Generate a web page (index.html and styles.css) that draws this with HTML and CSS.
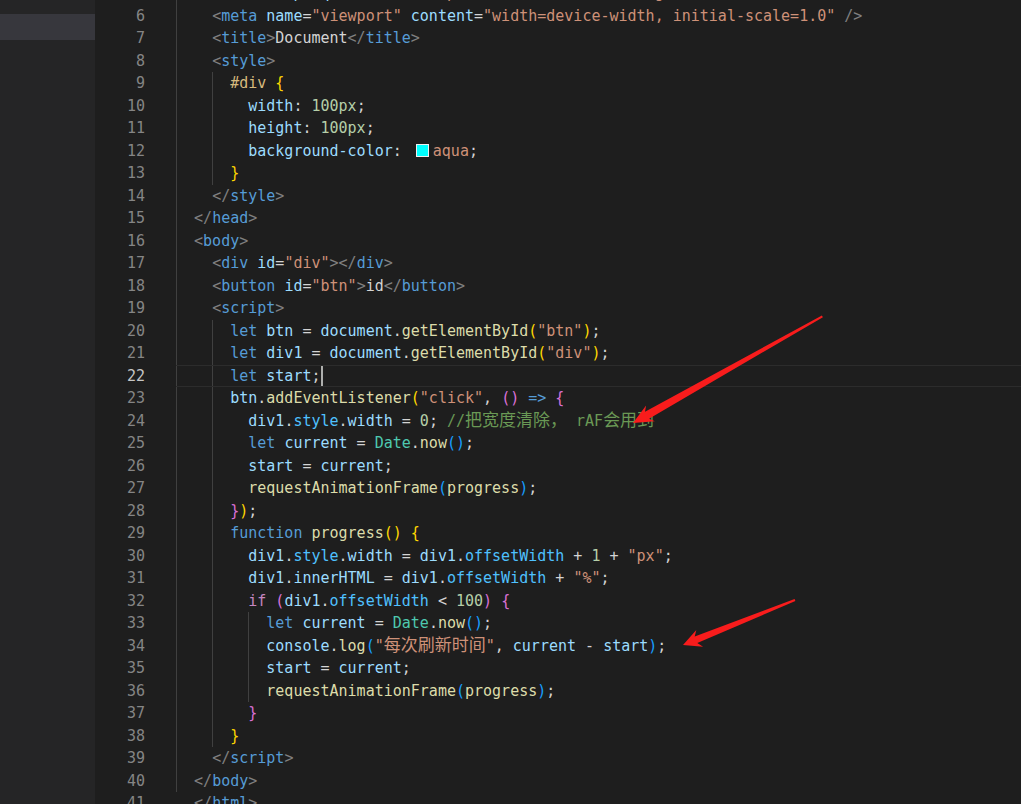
FILE: index.html
```html
<!DOCTYPE html>
<html lang="zh-CN">
<head>
  <meta charset="UTF-8">
  <title>index.html - Editor</title>
  <link rel="stylesheet" href="styles.css">
</head>
<body>

<div class="window">
  <!-- Explorer -->
  <aside class="sidebar">
    <div class="file active"></div>
  </aside>

  <!-- Editor -->
  <main class="editor">
    <div class="lines">
      <div class="row"><span class="num">5</span><code class="code g1">    <span class="p">&lt;</span><span class="t">meta</span> <span class="a">http-equiv</span>=<span class="s">"X-UA-Compatible"</span> <span class="a">content</span>=<span class="s">"IE=edge"</span> <span class="p">/&gt;</span></code></div>
      <div class="row"><span class="num">6</span><code class="code g1">    <span class="p">&lt;</span><span class="t">meta</span> <span class="a">name</span>=<span class="s">"viewport"</span> <span class="a">content</span>=<span class="s">"width=device-width, initial-scale=1.0"</span> <span class="p">/&gt;</span></code></div>
      <div class="row"><span class="num">7</span><code class="code g1">    <span class="p">&lt;</span><span class="t">title</span><span class="p">&gt;</span>Document<span class="p">&lt;/</span><span class="t">title</span><span class="p">&gt;</span></code></div>
      <div class="row"><span class="num">8</span><code class="code g1">    <span class="p">&lt;</span><span class="t">style</span><span class="p">&gt;</span></code></div>
      <div class="row"><span class="num">9</span><code class="code g2">      <span class="sel">#div</span> <span class="b1">{</span></code></div>
      <div class="row"><span class="num">10</span><code class="code g2">        <span class="a">width</span>: <span class="n">100px</span>;</code></div>
      <div class="row"><span class="num">11</span><code class="code g2">        <span class="a">height</span>: <span class="n">100px</span>;</code></div>
      <div class="row"><span class="num">12</span><code class="code g2">        <span class="a">background-color</span>: <span class="swatch"></span><span class="s">aqua</span>;</code></div>
      <div class="row"><span class="num">13</span><code class="code g2">      <span class="b1">}</span></code></div>
      <div class="row"><span class="num">14</span><code class="code g1">    <span class="p">&lt;/</span><span class="t">style</span><span class="p">&gt;</span></code></div>
      <div class="row"><span class="num">15</span><code class="code g1">  <span class="p">&lt;/</span><span class="t">head</span><span class="p">&gt;</span></code></div>
      <div class="row"><span class="num">16</span><code class="code g1">  <span class="p">&lt;</span><span class="t">body</span><span class="p">&gt;</span></code></div>
      <div class="row"><span class="num">17</span><code class="code g1">    <span class="p">&lt;</span><span class="t">div</span> <span class="a">id</span>=<span class="s">"div"</span><span class="p">&gt;&lt;/</span><span class="t">div</span><span class="p">&gt;</span></code></div>
      <div class="row"><span class="num">18</span><code class="code g1">    <span class="p">&lt;</span><span class="t">button</span> <span class="a">id</span>=<span class="s">"btn"</span><span class="p">&gt;</span>id<span class="p">&lt;/</span><span class="t">button</span><span class="p">&gt;</span></code></div>
      <div class="row"><span class="num">19</span><code class="code g1">    <span class="p">&lt;</span><span class="t">script</span><span class="p">&gt;</span></code></div>
      <div class="row"><span class="num">20</span><code class="code g2">      <span class="k">let</span> <span class="v">btn</span> = <span class="v">document</span>.<span class="f">getElementById</span><span class="b1">(</span><span class="s">"btn"</span><span class="b1">)</span>;</code></div>
      <div class="row"><span class="num">21</span><code class="code g2">      <span class="k">let</span> <span class="v">div1</span> = <span class="v">document</span>.<span class="f">getElementById</span><span class="b1">(</span><span class="s">"div"</span><span class="b1">)</span>;</code></div>
      <div class="row current"><span class="num">22</span><code class="code g2">      <span class="k">let</span> <span class="v">start</span>;<span class="caret"></span></code></div>
      <div class="row"><span class="num">23</span><code class="code g2">      <span class="v">btn</span>.<span class="f">addEventListener</span><span class="b1">(</span><span class="s">"click"</span>, <span class="b2">()</span> <span class="k">=&gt;</span> <span class="b2">{</span></code></div>
      <div class="row"><span class="num">24</span><code class="code g2">        <span class="v">div1</span>.<span class="cst">style</span>.<span class="v">width</span> = <span class="n">0</span>; <span class="cm">//<span class="cjk">把宽度清除，</span> rAF<span class="cjk">会用到</span></span></code></div>
      <div class="row"><span class="num">25</span><code class="code g2">        <span class="k">let</span> <span class="v">current</span> = <span class="cl">Date</span>.<span class="f">now</span><span class="b3">()</span>;</code></div>
      <div class="row"><span class="num">26</span><code class="code g2">        <span class="v">start</span> = <span class="v">current</span>;</code></div>
      <div class="row"><span class="num">27</span><code class="code g2">        <span class="f">requestAnimationFrame</span><span class="b3">(</span><span class="f">progress</span><span class="b3">)</span>;</code></div>
      <div class="row"><span class="num">28</span><code class="code g2">      <span class="b2">}</span><span class="b1">)</span>;</code></div>
      <div class="row"><span class="num">29</span><code class="code g2">      <span class="k">function</span> <span class="f">progress</span><span class="b1">()</span> <span class="b1">{</span></code></div>
      <div class="row"><span class="num">30</span><code class="code g2">        <span class="v">div1</span>.<span class="cst">style</span>.<span class="v">width</span> = <span class="v">div1</span>.<span class="cst">offsetWidth</span> + <span class="n">1</span> + <span class="s">"px"</span>;</code></div>
      <div class="row"><span class="num">31</span><code class="code g2">        <span class="v">div1</span>.<span class="v">innerHTML</span> = <span class="v">div1</span>.<span class="cst">offsetWidth</span> + <span class="s">"%"</span>;</code></div>
      <div class="row"><span class="num">32</span><code class="code g2">        <span class="kc">if</span> <span class="b2">(</span><span class="v">div1</span>.<span class="cst">offsetWidth</span> &lt; <span class="n">100</span><span class="b2">)</span> <span class="b2">{</span></code></div>
      <div class="row"><span class="num">33</span><code class="code g3">          <span class="k">let</span> <span class="v">current</span> = <span class="cl">Date</span>.<span class="f">now</span><span class="b3">()</span>;</code></div>
      <div class="row"><span class="num">34</span><code class="code g3">          <span class="v">console</span>.<span class="f">log</span><span class="b3">(</span><span class="s">"<span class="cjk">每次刷新时间</span>"</span>, <span class="v">current</span> - <span class="v">start</span><span class="b3">)</span>;</code></div>
      <div class="row"><span class="num">35</span><code class="code g3">          <span class="v">start</span> = <span class="v">current</span>;</code></div>
      <div class="row"><span class="num">36</span><code class="code g3">          <span class="f">requestAnimationFrame</span><span class="b3">(</span><span class="f">progress</span><span class="b3">)</span>;</code></div>
      <div class="row"><span class="num">37</span><code class="code g2">        <span class="b2">}</span></code></div>
      <div class="row"><span class="num">38</span><code class="code g2">      <span class="b1">}</span></code></div>
      <div class="row"><span class="num">39</span><code class="code g1">    <span class="p">&lt;/</span><span class="t">script</span><span class="p">&gt;</span></code></div>
      <div class="row"><span class="num">40</span><code class="code g1">  <span class="p">&lt;/</span><span class="t">body</span><span class="p">&gt;</span></code></div>
      <div class="row"><span class="num">41</span><code class="code">  <span class="p">&lt;/</span><span class="t">html</span><span class="p">&gt;</span></code></div>
    </div>
  </main>
</div>

<!-- annotation arrows drawn over the screenshot -->
<svg class="marks" width="1021" height="804" viewBox="0 0 1021 804">
  <polygon points="633,423 654.9,421.2 649,418.7 822.9,317.2 821.9,315.4 645,411.7 646.1,405.4" />
  <polygon points="683,645 703.1,646.7 697.3,643 795.4,600.9 794.6,599.1 694.7,636.6 696.3,629.9" />
</svg>

</body>
</html>
```

FILE: styles.css
```css
/* Dark editor layout */
body {
  margin: 0;
  background: #1e1e1e;
  color: #d4d4d4;
  font-family: "DejaVu Sans Mono", "Liberation Mono", monospace;
  font-size: 15px;
  overflow: hidden;
}
.window {
  display: flex;
  height: 804px;
  overflow: hidden;
}
.sidebar {
  width: 95px;
  flex-shrink: 0;
  background: #252526;
  padding-top: 14px;
}
.file {
  height: 26px;
}
.file.active {
  background: #37373d;
}
.editor {
  flex: 1;
  background: #1e1e1e;
  overflow: hidden;
}
.lines {
  margin-top: -17.75px;
}
.row {
  display: flex;
  height: 22.5px;
  line-height: 22.5px;
}
.num {
  width: 50px;
  flex-shrink: 0;
  text-align: right;
  color: #858585;
}
.code {
  flex: 1;
  margin-left: 31px;
  white-space: pre;
  font-family: inherit;
  font-size: inherit;
  background-repeat: no-repeat;
}
.row.current .num {
  color: #c6c6c6;
}
.row.current .code {
  box-sizing: border-box;
  border-top: 1px solid #2c2c2c;
  border-bottom: 1px solid #2c2c2c;
  line-height: 20.5px;
}

/* indent guides every 4 columns */
.g1 {
  background-image: linear-gradient(#404040, #404040);
  background-size: 1px 100%;
  background-position: 0 0;
}
.g2 {
  background-image: linear-gradient(#404040, #404040), linear-gradient(#404040, #404040);
  background-size: 1px 100%, 1px 100%;
  background-position: 0 0, 36px 0;
}
.g3 {
  background-image: linear-gradient(#404040, #404040), linear-gradient(#404040, #404040), linear-gradient(#404040, #404040);
  background-size: 1px 100%, 1px 100%, 1px 100%;
  background-position: 0 0, 36px 0, 72px 0;
}

/* syntax colours */
.p { color: #808080; }
.t { color: #569cd6; }
.a { color: #9cdcfe; }
.s { color: #ce9178; }
.sel { color: #d7ba7d; }
.n { color: #b5cea8; }
.k { color: #569cd6; }
.kc { color: #c586c0; }
.v { color: #9cdcfe; }
.cst { color: #4fc1ff; }
.f { color: #dcdcaa; }
.cl { color: #4ec9b0; }
.cm { color: #6a9955; }
.b1 { color: #ffd700; }
.b2 { color: #da70d6; }
.b3 { color: #179fff; }

.cjk {
  font-family: "Noto Sans CJK SC", sans-serif;
  font-size: 17px;
  line-height: 1;
}
.swatch {
  display: inline-block;
  width: 11px;
  height: 11px;
  margin: 0 4px 0 5px;
  border: 1px solid #eeeeee;
  background: aqua;
  vertical-align: -1px;
}
.caret {
  display: inline-block;
  width: 2px;
  height: 20px;
  background: #aeafad;
  vertical-align: middle;
}

.marks {
  position: absolute;
  left: 0;
  top: 0;
  pointer-events: none;
}
.marks polygon {
  fill: #f81c1c;
}
```
